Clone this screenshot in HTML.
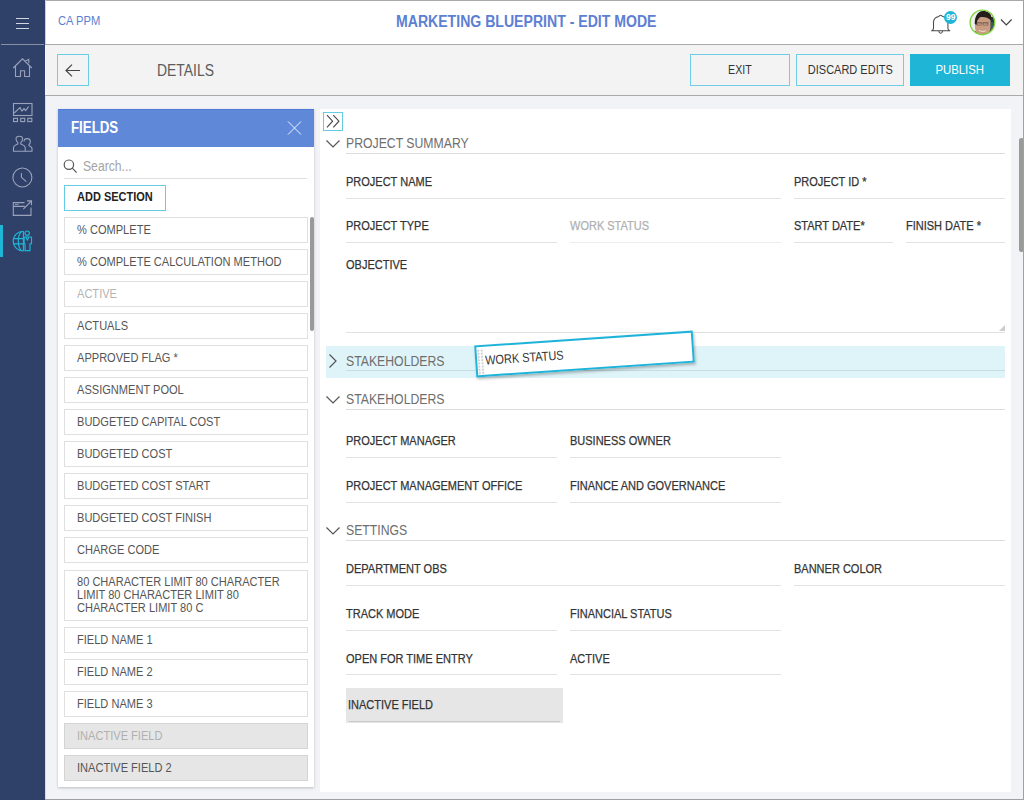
<!DOCTYPE html>
<html><head><meta charset="utf-8">
<style>
*{box-sizing:border-box;margin:0;padding:0}
html,body{width:1024px;height:800px;overflow:hidden;background:#f2f3f7;font-family:"Liberation Sans",sans-serif;color:#333}
.a{position:absolute}
.s{display:inline-block;transform-origin:0 50%;white-space:nowrap}
#side{left:0;top:0;width:45px;height:800px;background:#2f4069}
#hdr{left:45px;top:0;width:979px;height:45px;background:#fff;border-top:1px solid #a9a9a9;border-bottom:1px solid #a9a9a9}
#sub{left:45px;top:45px;width:979px;height:51px;background:#f3f3f3;border-bottom:1px solid #a9a9a9}
.btn{position:absolute;top:54px;height:32px;border:1px solid #70cde6;background:#f3f3f3;font-size:12.5px;color:#333;text-align:center;line-height:30px}
.fp{left:57.5px;top:109px;width:256.5px;height:678px;background:#fff;box-shadow:0 0.5px 2.5px rgba(0,0,0,.22)}
.fi{position:absolute;left:64px;width:244px;height:26px;border:1px solid #e0e0e0;background:#fff;font-size:12.5px;color:#555;line-height:24px;padding-left:12px}
.fi.in{background:#e6e6e6;border-color:#d4d4d4}
.cp{left:320px;top:109px;width:691px;height:683px;background:#fff}
.lbl{position:absolute;font-size:12.5px;color:#333;line-height:14px;-webkit-text-stroke-width:0.25px}
.lbl .s{transform:scaleX(.88)!important}
.ul{position:absolute;height:1px;background:#e2e2e2}
.sec{position:absolute;font-size:14px;color:#6e6e6e;line-height:16px}
</style></head><body>
<!-- sidebar -->
<div id="side" class="a"></div>
<div id="hdr" class="a"></div>
<div id="sub" class="a"></div>
<div class="a" style="left:45px;top:0;width:1px;height:44px;background:#d2d2d2"></div><div class="a" style="left:45px;top:45px;width:1px;height:50px;background:#f6f6f6"></div><div class="a" style="left:45px;top:96px;width:1px;height:703px;background:#d9dade"></div>
<!-- sidebar icons -->
<svg class="a" style="left:0;top:0" width="45" height="800" viewBox="0 0 45 800" fill="none" stroke="#9aa3ba" stroke-width="1.1">
  <g stroke="#d2d5e3" stroke-width="1.15"><path d="M16 18.5H29M16 23.5H29M16 28.5H29"/></g>
  <path d="M1 44.5H44" stroke="#888fa2" stroke-width="1.1"/>
  <!-- home -->
  <path d="M13.2 68L22.5 58.8L31.8 68M15.5 66V76.5H20.5V70.8H24.6V76.5H29.5V66M25 61.3L28.8 59.3V63.2"/>
  <!-- chart -->
  <rect x="13.5" y="103.5" width="18.5" height="12"/>
  <path d="M14.2 113L20 107.7L22 111L24 108.6L25.6 110.5L28.6 106.6"/>
  <rect x="13.5" y="118.3" width="4" height="3.3"/><rect x="20.7" y="118.3" width="4" height="3.3"/><rect x="27.8" y="118.3" width="4" height="3.3"/>
  <!-- people -->
  <path d="M13.5 151.3V147.8C13.5 145.8 15 145 17.8 144V142.6C16.6 141.6 16 140.2 16 138.8C16 137.1 17.2 136.2 19.3 136.2C21.4 136.2 22.6 137.1 22.6 138.8C22.6 140.2 22 141.6 20.8 142.6V144C23.6 145 25.2 145.8 25.2 147.8V151.3Z"/>
  <path d="M25.2 151.3H32V148.5C32 147 30.9 146.4 29 145.7V144.6C29.9 143.9 30.3 142.8 30.3 141.5C30.3 139.6 29.3 138.6 27.2 138.6C25.1 138.6 24 139.6 24 141.5"/>
  <!-- clock -->
  <circle cx="22.4" cy="177.5" r="9.5"/>
  <path d="M21.4 173V177.3L26.3 181.6"/>
  <!-- export -->
  <path d="M24.5 202.6H13.3V215.4H31V207.5M13.3 206.4H24.8M23.3 209.2L31.4 201M27 200.9H31.5V205.2"/>
  <path d="M15 204.4H18.5" stroke-width="0.9"/>
  <!-- globe person active -->
  <g stroke="#1fb5d6" stroke-width="1.15">
    <path d="M23.4 231.2A10.2 9.9 0 0 0 23.4 251"/>
    <path d="M21.6 231.5C17.2 235 17.2 247.3 21.6 250.8M13.6 238.6H23.4M13.6 243.8H23.4M23.4 231.2V251"/>
    <circle cx="27.2" cy="233.2" r="2.2"/>
    <path d="M24.2 237H31.5V243.7H30V250.6H25V243.7H24.2ZM25.8 237.2L27.3 240L28.8 237.2"/>
  </g>
</svg>
<div class="a" style="left:0;top:225px;width:3px;height:32px;background:#1fb5d6"></div>

<!-- header -->
<div class="a" style="left:57.5px;top:14px;font-size:12.5px;line-height:14px;color:#5b7fd0"><span class="s" style="transform:scaleX(.895)">CA PPM</span></div>
<div class="a" style="left:395.5px;top:13px;font-size:16px;line-height:18px;font-weight:bold;color:#5d80d3"><span class="s" style="transform:scaleX(.88)">MARKETING BLUEPRINT - EDIT MODE</span></div>
<!-- bell -->
<svg class="a" style="left:926px;top:8px" width="34" height="30" viewBox="926 8 34 30" fill="none" stroke="#4a4a4a" stroke-width="1.05">
  <path d="M931.2 30.8H950.2M931.8 30.8C932.8 30.3 933.5 29.5 933.5 28.3V22.5C933.5 19.5 935.5 17.3 938.8 16.6C939.2 15.9 939.8 15.3 940.7 15.3C941.6 15.3 942.2 15.9 942.6 16.6C945.9 17.3 947.9 19.5 947.9 22.5V28.3C947.9 29.5 948.6 30.3 949.6 30.8M938.8 31C939 32.5 939.8 33.3 940.7 33.3C941.6 33.3 942.4 32.5 942.6 31"/>
</svg>
<div class="a" style="left:944px;top:10.5px;width:13.4px;height:13.4px;border-radius:50%;background:#1fb5d6;color:#fff;font-size:8.5px;font-weight:bold;line-height:13.4px;text-align:center">99</div>
<!-- avatar -->
<svg class="a" style="left:969px;top:9px" width="27" height="27" viewBox="0 0 27 27">
  <defs><clipPath id="av"><circle cx="13.4" cy="13.4" r="12.2"/></clipPath></defs>
  <g clip-path="url(#av)">
    <rect width="27" height="27" fill="#eeeeee"/>
    <rect x="20" y="8" width="7" height="19" fill="#26333a"/>
    <rect x="21.5" y="13" width="3" height="8" fill="#3d5a5c"/>
    <path d="M5 27L6 22L9 24Z" fill="#2a2a2a"/>
    <path d="M6 13C6 8 9 4.5 13.5 4.5C18 4.5 21.5 7 21.5 12V18C21.5 23 18 26.5 13.5 26.5C9.5 26.5 6.5 23.5 6 19Z" fill="#c99d82"/>
    <path d="M5.8 15C5.5 9 8 2 14 2C19 2 22.5 4 22.5 9.5L21.5 11C19 8.5 15 7.5 11 8.3L8.3 11.5L7.5 16Z" fill="#241d1c"/>
    <path d="M7.5 14H19.5M8 13.6H12.3V16.2H8ZM14.2 13.6H19V16.2H14.2Z" stroke="#4b3b35" stroke-width="0.7" fill="none" opacity=".6"/>
    <path d="M10 21.3C12 22.6 14.5 22.8 16.8 21.8" stroke="#efe2da" stroke-width="1" fill="none"/>
  </g>
  <circle cx="13.4" cy="13.4" r="12.3" fill="none" stroke="#7ed43e" stroke-width="1.4"/>
</svg>
<svg class="a" style="left:1000px;top:17px" width="13" height="10" viewBox="0 0 13 10" fill="none" stroke="#444" stroke-width="1.2"><path d="M1 2.5L6.3 7.8L11.6 2.5"/></svg>

<!-- subheader -->
<div class="a" style="left:57px;top:54px;width:32px;height:32px;border:1.3px solid #6ccde6"></div>
<svg class="a" style="left:57px;top:54px" width="32" height="32" viewBox="0 0 32 32" fill="none" stroke="#444" stroke-width="1.2"><path d="M9.2 16.5H23M15 10.6L9 16.5L15 22.4"/></svg>
<div class="a" style="left:157px;top:62px;font-size:16px;line-height:18px;color:#5c5c5c"><span class="s" style="transform:scaleX(.87)">DETAILS</span></div>
<div class="btn" style="left:690px;width:100px"><span class="s" style="transform:scaleX(.85);transform-origin:50% 50%">EXIT</span></div>
<div class="btn" style="left:796px;width:108px"><span class="s" style="transform:scaleX(.88);transform-origin:50% 50%">DISCARD EDITS</span></div>
<div class="btn" style="left:910px;width:100px;background:#1fb5d6;border-color:#1fb5d6;color:#fff"><span class="s" style="transform:scaleX(.91);transform-origin:50% 50%">PUBLISH</span></div>
<!-- fields panel -->
<div class="a fp"></div>
<div class="a" style="left:57.5px;top:109px;width:256.5px;height:38px;background:#6088d8;border-top:1px solid #4f79d6"></div>
<div class="a" style="left:71px;top:119px;font-size:16px;line-height:18px;font-weight:bold;color:#fff"><span class="s" style="transform:scaleX(.83)">FIELDS</span></div>
<svg class="a" style="left:286px;top:119px" width="17" height="18" viewBox="0 0 17 18" fill="none" stroke="#eef2fb" stroke-width="1"><path d="M2 2.5L15 15.5M15 2.5L2 15.5"/></svg>
<svg class="a" style="left:62px;top:158px" width="17" height="17" viewBox="0 0 17 17" fill="none" stroke="#555" stroke-width="1.2"><circle cx="6.9" cy="6.7" r="4.7"/><path d="M10.3 10.2L14.6 14.6"/></svg>
<div class="a" style="left:83px;top:158px;font-size:14px;line-height:16px;color:#a4a4a4"><span class="s" style="transform:scaleX(.87)">Search...</span></div>
<div class="a" style="left:64px;top:178px;width:243px;height:1px;background:#dedede"></div>
<div class="a" style="left:64px;top:185px;width:102px;height:26px;border:1.5px solid #66cbe5;font-size:12.5px;font-weight:bold;line-height:23px;padding-left:11.5px;color:#222"><span class="s" style="transform:scaleX(.88)">ADD SECTION</span></div>
<div class="fi" style="top:217px;color:#555"><span class="s" style="transform:scaleX(.885)">&#37; COMPLETE</span></div>
<div class="fi" style="top:249px;color:#555"><span class="s" style="transform:scaleX(.885)">&#37; COMPLETE CALCULATION METHOD</span></div>
<div class="fi" style="top:281px;color:#b4b4b4"><span class="s" style="transform:scaleX(.885)">ACTIVE</span></div>
<div class="fi" style="top:313px;color:#555"><span class="s" style="transform:scaleX(.885)">ACTUALS</span></div>
<div class="fi" style="top:345px;color:#555"><span class="s" style="transform:scaleX(.885)">APPROVED FLAG *</span></div>
<div class="fi" style="top:377px;color:#555"><span class="s" style="transform:scaleX(.885)">ASSIGNMENT POOL</span></div>
<div class="fi" style="top:409px;color:#555"><span class="s" style="transform:scaleX(.885)">BUDGETED CAPITAL COST</span></div>
<div class="fi" style="top:441px;color:#555"><span class="s" style="transform:scaleX(.885)">BUDGETED COST</span></div>
<div class="fi" style="top:473px;color:#555"><span class="s" style="transform:scaleX(.885)">BUDGETED COST START</span></div>
<div class="fi" style="top:505px;color:#555"><span class="s" style="transform:scaleX(.885)">BUDGETED COST FINISH</span></div>
<div class="fi" style="top:537px;color:#555"><span class="s" style="transform:scaleX(.885)">CHARGE CODE</span></div>
<div class="fi" style="top:570px;height:51px;line-height:12.8px;padding-top:5px"><span class="s" style="transform:scaleX(.885)">80 CHARACTER LIMIT 80 CHARACTER<br>LIMIT 80 CHARACTER LIMIT 80<br>CHARACTER LIMIT 80 C</span></div>
<div class="fi" style="top:627px"><span class="s" style="transform:scaleX(.885)">FIELD NAME 1</span></div>
<div class="fi" style="top:659px"><span class="s" style="transform:scaleX(.885)">FIELD NAME 2</span></div>
<div class="fi" style="top:691px"><span class="s" style="transform:scaleX(.885)">FIELD NAME 3</span></div>
<div class="fi in" style="top:723px;color:#b0b0b0"><span class="s" style="transform:scaleX(.885)">INACTIVE FIELD</span></div>
<div class="fi in" style="top:755px;color:#555"><span class="s" style="transform:scaleX(.885)">INACTIVE FIELD 2</span></div>
<div class="a" style="left:310px;top:217px;width:4px;height:114px;border-radius:2px;background:#999"></div><!-- content panel -->
<div class="a cp"></div>
<div class="a" style="left:323px;top:112px;width:20px;height:19px;border:1.5px solid #66cbe5"></div>
<svg class="a" style="left:323px;top:112px" width="20" height="19" viewBox="0 0 20 19" fill="none" stroke="#444" stroke-width="1.1"><path d="M4 3.2L9.6 9.2L4 15.3M10.3 3.2L15.9 9.2L10.3 15.3"/></svg>
<svg class="a" style="left:325px;top:139px" width="16" height="10" viewBox="0 0 16 10" fill="none" stroke="#555" stroke-width="1.2"><path d="M1.5 1.5L8 8L14.5 1.5"/></svg>
<div class="sec" style="left:346px;top:134.9px"><span class="s" style="transform:scaleX(.875)">PROJECT SUMMARY</span></div>
<div class="ul" style="left:346px;top:153px;width:659px;background:#dcdcdc"></div>
<div class="lbl" style="left:346px;top:174.8px;color:#333"><span class="s" style="transform:scaleX(0.87)">PROJECT NAME</span></div>
<div class="ul" style="left:346px;top:198px;width:435px;background:#e2e2e2"></div>
<div class="lbl" style="left:794px;top:174.8px;color:#333"><span class="s" style="transform:scaleX(0.87)">PROJECT ID *</span></div>
<div class="ul" style="left:794px;top:198px;width:211px;background:#e2e2e2"></div>
<div class="lbl" style="left:346px;top:219.3px;color:#333"><span class="s" style="transform:scaleX(0.87)">PROJECT TYPE</span></div>
<div class="ul" style="left:346px;top:242px;width:211px;background:#e2e2e2"></div>
<div class="lbl" style="left:570px;top:219.3px;color:#b0b0b0"><span class="s" style="transform:scaleX(0.87)">WORK STATUS</span></div>
<div class="ul" style="left:570px;top:242px;width:211px;background:#ececec"></div>
<div class="lbl" style="left:794px;top:219.3px;color:#333"><span class="s" style="transform:scaleX(0.87)">START DATE*</span></div>
<div class="ul" style="left:794px;top:242px;width:99px;background:#e2e2e2"></div>
<div class="lbl" style="left:906px;top:219.3px;color:#333"><span class="s" style="transform:scaleX(0.87)">FINISH DATE *</span></div>
<div class="ul" style="left:906px;top:242px;width:99px;background:#e2e2e2"></div>
<div class="lbl" style="left:346px;top:258.1px;color:#333"><span class="s" style="transform:scaleX(0.87)">OBJECTIVE</span></div>
<div class="ul" style="left:346px;top:332px;width:659px;background:#e2e2e2"></div>
<svg class="a" style="left:997.5px;top:324px" width="8" height="8" viewBox="0 0 8 8"><path d="M7 1V7H1Z" fill="#cdcdcd"/></svg>
<div class="a" style="left:326px;top:346px;width:679px;height:31.5px;background:#dff4f9"></div>
<svg class="a" style="left:327px;top:353px" width="12" height="16" viewBox="0 0 12 16" fill="none" stroke="#555" stroke-width="1.2"><path d="M2.5 1.5L9 8L2.5 14.5"/></svg>
<div class="sec" style="left:346px;top:352.8px"><span class="s" style="transform:scaleX(.875)">STAKEHOLDERS</span></div>
<div class="ul" style="left:346px;top:370px;width:659px;background:#c5dde3"></div>
<svg class="a" style="left:325px;top:395px" width="16" height="10" viewBox="0 0 16 10" fill="none" stroke="#555" stroke-width="1.2"><path d="M1.5 1.5L8 8L14.5 1.5"/></svg>
<div class="sec" style="left:346px;top:391.4px"><span class="s" style="transform:scaleX(.875)">STAKEHOLDERS</span></div>
<div class="ul" style="left:346px;top:409px;width:659px;background:#dcdcdc"></div>
<div class="lbl" style="left:346px;top:434.1px;color:#333"><span class="s" style="transform:scaleX(0.87)">PROJECT MANAGER</span></div>
<div class="ul" style="left:346px;top:457px;width:211px;background:#e2e2e2"></div>
<div class="lbl" style="left:570px;top:434.1px;color:#333"><span class="s" style="transform:scaleX(0.87)">BUSINESS OWNER</span></div>
<div class="ul" style="left:570px;top:457px;width:211px;background:#e2e2e2"></div>
<div class="lbl" style="left:346px;top:478.8px;color:#333"><span class="s" style="transform:scaleX(0.87)">PROJECT MANAGEMENT OFFICE</span></div>
<div class="ul" style="left:346px;top:502px;width:211px;background:#e2e2e2"></div>
<div class="lbl" style="left:570px;top:478.8px;color:#333"><span class="s" style="transform:scaleX(0.87)">FINANCE AND GOVERNANCE</span></div>
<div class="ul" style="left:570px;top:502px;width:211px;background:#e2e2e2"></div>
<svg class="a" style="left:325px;top:525.5px" width="16" height="10" viewBox="0 0 16 10" fill="none" stroke="#555" stroke-width="1.2"><path d="M1.5 1.5L8 8L14.5 1.5"/></svg>
<div class="sec" style="left:346px;top:522.0px"><span class="s" style="transform:scaleX(.875)">SETTINGS</span></div>
<div class="ul" style="left:346px;top:540px;width:659px;background:#dcdcdc"></div>
<div class="lbl" style="left:346px;top:562.1px;color:#333"><span class="s" style="transform:scaleX(0.87)">DEPARTMENT OBS</span></div>
<div class="ul" style="left:346px;top:585px;width:435px;background:#e2e2e2"></div>
<div class="lbl" style="left:794px;top:562.1px;color:#333"><span class="s" style="transform:scaleX(0.87)">BANNER COLOR</span></div>
<div class="ul" style="left:794px;top:585px;width:211px;background:#e2e2e2"></div>
<div class="lbl" style="left:346px;top:607.2px;color:#333"><span class="s" style="transform:scaleX(0.87)">TRACK MODE</span></div>
<div class="ul" style="left:346px;top:630px;width:211px;background:#e2e2e2"></div>
<div class="lbl" style="left:570px;top:607.2px;color:#333"><span class="s" style="transform:scaleX(0.87)">FINANCIAL STATUS</span></div>
<div class="ul" style="left:570px;top:630px;width:211px;background:#e2e2e2"></div>
<div class="lbl" style="left:346px;top:651.8px;color:#333"><span class="s" style="transform:scaleX(0.87)">OPEN FOR TIME ENTRY</span></div>
<div class="ul" style="left:346px;top:674px;width:211px;background:#e2e2e2"></div>
<div class="lbl" style="left:570px;top:651.8px;color:#333"><span class="s" style="transform:scaleX(0.87)">ACTIVE</span></div>
<div class="ul" style="left:570px;top:674px;width:211px;background:#e2e2e2"></div>
<div class="a" style="left:346px;top:688px;width:217px;height:35px;background:#e6e6e6"></div>
<div class="ul" style="left:349px;top:721px;width:211px;background:#c9c9c9"></div>
<div class="lbl" style="left:348px;top:698.2px;color:#333"><span class="s" style="transform:scaleX(0.87)">INACTIVE FIELD</span></div>
<div class="a" style="left:474.95px;top:337.85px;width:218.5px;height:31.8px;transform:rotate(-3.9deg);background:#fff;border:2px solid #1fb3d9;box-shadow:1px 2px 3px rgba(0,0,0,.28)"><div class="a" style="left:0.3px;top:1.5px;width:7px;height:26px;background-image:radial-gradient(circle,#cfcfcf 0.9px,transparent 1.4px);background-size:3.4px 3.2px"></div><div class="a" style="left:7.8px;top:5.6px;font-size:13px;line-height:15px;color:#333"><span class="s" style="transform:scaleX(.84)">WORK STATUS</span></div></div>
<div class="a" style="left:1018.8px;top:137.5px;width:4.5px;height:114.5px;border-radius:2.2px 1px 1px 2.2px;background:#9a9a9a"></div>
<!-- page right/bottom frame -->
<div class="a" style="left:1023px;top:0;width:1px;height:800px;background:#a0a0a0"></div>
<div class="a" style="left:45px;top:799px;width:979px;height:1px;background:#a0a0a0"></div>
</body></html>
